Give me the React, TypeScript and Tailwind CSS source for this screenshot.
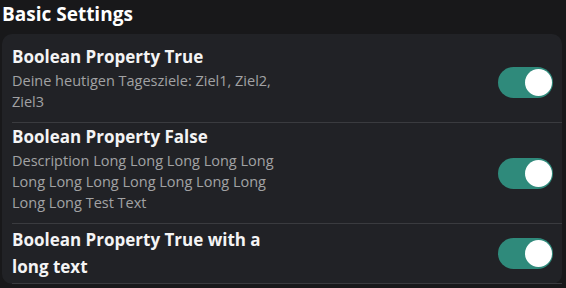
import React from "react";

function Toggle() {
  return (
    <div className="flex h-[31px] w-[55px] shrink-0 items-center justify-end rounded-full bg-[#2f8a7b] pr-[1.5px]">
      <div className="h-[27px] w-[27px] rounded-full bg-white" />
    </div>
  );
}

function Row({
  title,
  desc,
  className,
}: {
  title: string;
  desc?: string;
  className: string;
}) {
  return (
    <div className="flex items-center border-b border-[#3a3b3f] pr-[9px]">
      <div className={`w-[282px] ${className}`}>
        <div className="text-[17px] font-bold leading-[27px] text-[#f4f4f5]">{title}</div>
        {desc && <div className="text-[14.5px] leading-[21px] text-[#a2a2a4]">{desc}</div>}
      </div>
      <div className="ml-auto">
        <Toggle />
      </div>
    </div>
  );
}

export default function App() {
  return (
    <div className="h-[288px] w-[566px] overflow-hidden bg-[#18181a] font-['Open_Sans',sans-serif]">
      <h2 className="pl-[2px] text-[19px] font-bold leading-[28px] text-white">Basic Settings</h2>
      <div className="ml-[2px] mt-[6px] w-[560px] rounded-[10px] bg-[#212226] pl-[10px] pt-[9px]">
        <Row
          title="Boolean Property True"
          desc="Deine heutigen Tagesziele: Ziel1, Ziel2, Ziel3"
          className="pb-[10px]"
        />
        <Row
          title="Boolean Property False"
          desc="Description Long Long Long Long Long Long Long Long Long Long Long Long Long Long Test Text"
          className="pb-[10px]"
        />
        <Row title="Boolean Property True with a long text" className="pb-[3px] pt-[2px]" />
      </div>
    </div>
  );
}
